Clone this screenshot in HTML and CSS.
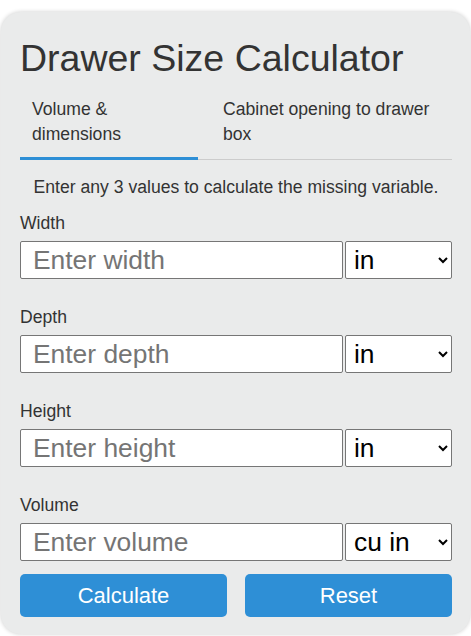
FILE: index.html
```html
<!DOCTYPE html>
<html lang="en">
<head>
    <meta charset="UTF-8">
    <meta name="viewport" content="width=device-width, initial-scale=1.0">
    <title>Drawer Size Calculator</title>
    <link rel="stylesheet" href="styles.css">
</head>
<body>
    <div class="calculator">
        <h1 class="title">Drawer Size Calculator</h1>

        <div class="tabs">
            <div class="tab active">Volume &amp; dimensions</div>
            <div class="tab">Cabinet opening to drawer box</div>
        </div>

        <p class="hint">Enter any 3 values to calculate the missing variable.</p>

        <form id="drawerForm">
            <div class="form-group">
                <label for="width">Width</label>
                <div class="input-row">
                    <input type="number" id="width" class="form-control" placeholder="Enter width">
                    <select id="widthUnit" class="unit-select">
                        <option value="in">in</option>
                        <option value="cm">cm</option>
                        <option value="mm">mm</option>
                    </select>
                </div>
            </div>
            <div class="form-group">
                <label for="depth">Depth</label>
                <div class="input-row">
                    <input type="number" id="depth" class="form-control" placeholder="Enter depth">
                    <select id="depthUnit" class="unit-select">
                        <option value="in">in</option>
                        <option value="cm">cm</option>
                        <option value="mm">mm</option>
                    </select>
                </div>
            </div>
            <div class="form-group">
                <label for="height">Height</label>
                <div class="input-row">
                    <input type="number" id="height" class="form-control" placeholder="Enter height">
                    <select id="heightUnit" class="unit-select">
                        <option value="in">in</option>
                        <option value="cm">cm</option>
                        <option value="mm">mm</option>
                    </select>
                </div>
            </div>
            <div class="form-group">
                <label for="volume">Volume</label>
                <div class="input-row">
                    <input type="number" id="volume" class="form-control" placeholder="Enter volume">
                    <select id="volumeUnit" class="unit-select">
                        <option value="cuin">cu in</option>
                        <option value="cuft">cu ft</option>
                        <option value="l">L</option>
                    </select>
                </div>
            </div>
            <div class="buttons">
                <button type="submit" class="btn">Calculate</button>
                <button type="reset" class="btn">Reset</button>
            </div>
        </form>
    </div>
</body>
</html>
```

FILE: styles.css
```css
body {
    margin: 0;
    padding: 12px 1px 2px;
    background-color: #fff;
    font-family: "Liberation Sans", Arial, sans-serif;
    font-size: 17.6px;
    line-height: 25px;
    color: #333;
}

.calculator {
    background-color: #eaebeb;
    border-radius: 20px;
    box-shadow: 0 0 4px rgba(0, 0, 0, 0.2);
    padding: 24px 18px 17px 19px;
}

.title {
    margin: 0 0 7px;
    font-size: 37.5px;
    font-weight: normal;
    line-height: 44px;
}

/* Tabs */
.tabs {
    display: flex;
    border-bottom: 1px solid #ccc;
}

.tab {
    padding: 10px 12px 10px;
    cursor: pointer;
}

.tab:first-child {
    width: 154px;
    margin-right: 13px;
}

.tab:last-child {
    flex: 1;
}

.tab.active {
    border-bottom: 3px solid #2e8fd6;
    margin-bottom: -1px;
}

.hint {
    margin: 15px 0 11px;
    text-align: center;
}

.form-group {
    margin-bottom: 26px;
}

.form-group label {
    display: block;
    margin-bottom: 5px;
}

.input-row {
    display: flex;
    gap: 2px;
}

.form-control,
.unit-select {
    box-sizing: border-box;
    height: 38px;
    border: 1px solid #767676;
    border-radius: 2px;
    background-color: #fff;
    font-family: "Liberation Sans", Arial, sans-serif;
    font-size: 26.4px;
    color: #000;
}

.form-control {
    flex: 1;
    min-width: 0;
    padding: 3px 12px;
}

.form-control::placeholder {
    color: #757575;
}

.unit-select {
    width: 107px;
    padding: 0 4px;
}

.buttons {
    display: flex;
    gap: 18px;
    margin-top: -13px;
}

.btn {
    flex: 1;
    height: 43px;
    border: none;
    border-radius: 5px;
    background-color: #2e8fd6;
    color: #fff;
    font-family: "Liberation Sans", Arial, sans-serif;
    font-size: 22px;
    cursor: pointer;
}

.btn:hover {
    background-color: #2379b8;
}
```
